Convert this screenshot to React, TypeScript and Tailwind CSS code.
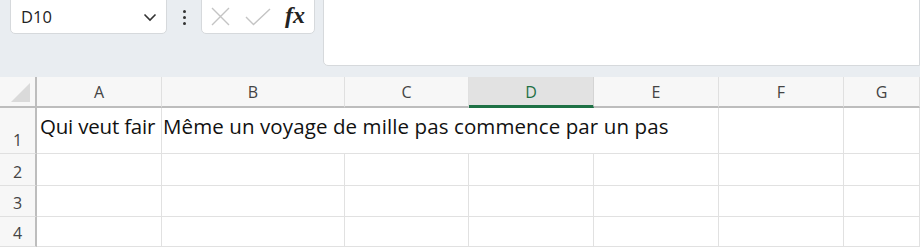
import React from "react";

const cols = ["A", "B", "C", "D", "E", "F", "G"];

export default function App() {
  const font = { fontFamily: '"Open Sans", "Noto Sans", sans-serif' };
  return (
    <div className="w-[920px] h-[247px] overflow-hidden bg-white" style={font}>
      {/* Toolbar */}
      <div className="h-[77px] bg-[#e9edf1] flex items-start">
        <div className="ml-[10px] w-[157px] h-[35px] -mt-[1px] bg-white border border-[#d6d9dc] rounded-b-[5px] flex items-center justify-between pl-[10px] pr-[9px]">
          <span className="text-[16.5px] text-[#222] mt-[1px]">D10</span>
          <svg width="14" height="9" viewBox="0 0 14 9" className="mt-[2px]">
            <path d="M1.5 1.5 L7 7 L12.5 1.5" fill="none" stroke="#333" strokeWidth="1.6" />
          </svg>
        </div>
        <div className="w-[34px] h-[34px] flex flex-col items-center justify-center gap-[3px]">
          <div className="w-[3px] h-[3px] rounded-full bg-[#333]" />
          <div className="w-[3px] h-[3px] rounded-full bg-[#333]" />
          <div className="w-[3px] h-[3px] rounded-full bg-[#333]" />
        </div>
        <div className="w-[114px] h-[35px] -mt-[1px] bg-white border border-[#d6d9dc] rounded-b-[5px] flex items-center pl-[9px]">
          <svg width="19" height="19" viewBox="0 0 19 19">
            <path d="M1 1 L18 18 M18 1 L1 18" stroke="#c4c4c4" strokeWidth="1.4" fill="none" />
          </svg>
          <svg width="26" height="18" viewBox="0 0 26 18" className="ml-[15px]">
            <path d="M1 9 L8.5 16.5 L25 1" stroke="#c4c4c4" strokeWidth="1.4" fill="none" />
          </svg>
          <span
            className="ml-[14px] text-[24px] italic font-semibold text-[#222] leading-none -mt-[3px]"
            style={{ fontFamily: '"Liberation Serif", "DejaVu Serif", serif' }}
          >
            fx
          </span>
        </div>
        <div className="ml-[8px] flex-1 h-[67px] -mt-[1px] bg-white border border-[#d6d9dc] rounded-bl-[5px]" />
      </div>

      {/* Grid */}
      <div className="grid grid-cols-[37px_125px_183px_124px_125px_125px_125px_76px] grid-rows-[31px_46px_32px_31px_30px] bg-white">
        {/* Header row */}
        <div className="bg-[#f7f7f7] border-r-2 border-b-2 border-[#bdbdbd] relative">
          <svg width="19" height="19" viewBox="0 0 19 19" className="absolute right-[5px] bottom-[4px]">
            <path d="M19 0 L19 19 L0 19 Z" fill="#dadada" />
          </svg>
        </div>
        {cols.map((c) =>
          c === "D" ? (
            <div
              key={c}
              className="bg-[#e2e2e2] border-r border-[#d4d4d4] border-b-[3px] border-b-[#1e7145] flex items-center justify-center text-[16px] text-[#1e7145] pt-[1px]"
            >
              {c}
            </div>
          ) : (
            <div
              key={c}
              className="bg-[#f7f7f7] border-r border-[#e0e0e0] border-b-2 border-b-[#bdbdbd] flex items-center justify-center text-[16px] text-[#444] pt-[1px]"
            >
              {c}
            </div>
          )
        )}

        {/* Row 1 */}
        <div className="bg-[#f7f7f7] border-r-2 border-b border-r-[#bdbdbd] border-b-[#e0e0e0] flex items-end justify-center pb-[1px] text-[16px] text-[#444]">
          1
        </div>
        <div className="border-r border-b border-[#e1e1e1] whitespace-nowrap pl-[3px] pt-[5px] text-[20.5px] text-[#111] leading-[26px] tracking-[-0.2px]">
          Qui veut fair
        </div>
        <div className="col-span-4 border-r border-b border-[#e1e1e1] whitespace-nowrap pl-[1px] pt-[5px] text-[20.5px] text-[#111] leading-[26px] tracking-[0.1px]">
          Même un voyage de mille pas commence par un pas
        </div>
        <div className="border-r border-b border-[#e1e1e1]" />
        <div className="border-r border-b border-[#e1e1e1]" />

        {[2, 3, 4].map((r) => (
          <React.Fragment key={r}>
            <div className="bg-[#f7f7f7] border-r-2 border-b border-r-[#bdbdbd] border-b-[#e0e0e0] flex items-end justify-center pb-[1px] text-[16px] text-[#444]">
              {r}
            </div>
            {cols.map((c) => (
              <div key={c} className="border-r border-b border-[#e1e1e1]" />
            ))}
          </React.Fragment>
        ))}
      </div>
    </div>
  );
}
